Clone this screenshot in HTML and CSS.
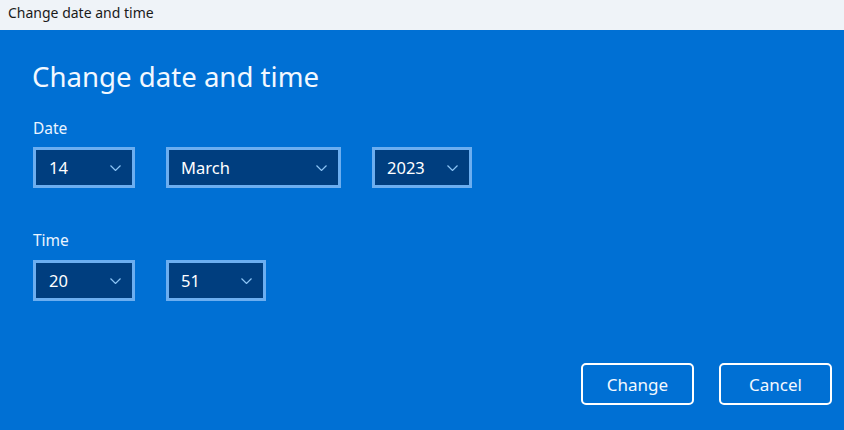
FILE: index.html
```html
<!DOCTYPE html>
<html>
<head>
<meta charset="utf-8">
<link rel="stylesheet" href="styles.css">
</head>
<body>
<div class="window">
  <div class="titlebar">Change date and time</div>
  <div class="content">
    <h1 class="heading">Change date and time</h1>
    <div class="label">Date</div>
    <div class="row">
      <div class="select w-day"><span>14</span><svg class="chev" viewBox="0 0 11 6"><path d="M0.5 0.5 L5.5 5.5 L10.5 0.5" fill="none" stroke="#8cc4f5" stroke-width="1.2"/></svg></div>
      <div class="select w-month"><span>March</span><svg class="chev" viewBox="0 0 11 6"><path d="M0.5 0.5 L5.5 5.5 L10.5 0.5" fill="none" stroke="#8cc4f5" stroke-width="1.2"/></svg></div>
      <div class="select w-year"><span>2023</span><svg class="chev" viewBox="0 0 11 6"><path d="M0.5 0.5 L5.5 5.5 L10.5 0.5" fill="none" stroke="#8cc4f5" stroke-width="1.2"/></svg></div>
    </div>
    <div class="label label-time">Time</div>
    <div class="row row-time">
      <div class="select w-day"><span>20</span><svg class="chev" viewBox="0 0 11 6"><path d="M0.5 0.5 L5.5 5.5 L10.5 0.5" fill="none" stroke="#8cc4f5" stroke-width="1.2"/></svg></div>
      <div class="select w-min"><span>51</span><svg class="chev" viewBox="0 0 11 6"><path d="M0.5 0.5 L5.5 5.5 L10.5 0.5" fill="none" stroke="#8cc4f5" stroke-width="1.2"/></svg></div>
    </div>
    <div class="actions">
      <button class="btn">Change</button>
      <button class="btn">Cancel</button>
    </div>
  </div>
</div>
</body>
</html>
```
FILE: styles.css
```css
html, body {
  margin: 0;
  padding: 0;
  width: 844px;
  height: 430px;
  overflow: hidden;
  font-family: "Noto Sans", "Open Sans", sans-serif;
}
.window {
  display: flex;
  flex-direction: column;
  height: 430px;
}
.titlebar {
  height: 30px;
  box-sizing: border-box;
  background: #eff3f8;
  color: #1a1a1a;
  font-size: 14px;
  padding-left: 8px;
  line-height: 26px;
}
.content {
  flex: 1;
  background: #0070d4;
  color: #ffffff;
  padding: 0 12px 0 33px;
  display: flex;
  flex-direction: column;
}
.heading {
  margin: 26px 0 0 -1px;
  font-weight: 400;
  font-size: 27.6px;
  line-height: 40px;
  color: #f2f8ff;
}
.label {
  margin-top: 21px;
  font-size: 15.5px;
  line-height: 22px;
  color: #eaf4ff;
}
.label-time {
  margin-top: 41px;
}
.row {
  display: flex;
  gap: 31px;
  margin-top: 8px;
}
.row-time {
  margin-top: 9px;
}
.select {
  box-sizing: border-box;
  height: 41px;
  border: 3px solid #6caef0;
  background: #003e7f;
  display: flex;
  align-items: center;
  justify-content: space-between;
  padding: 0 11px 0 13px;
  font-size: 16.5px;
  color: #ffffff;
}
.w-day { width: 102px; }
.w-month { width: 175px; padding-left: 12px; }
.w-year { width: 100px; padding-left: 12px; }
.w-min { width: 100px; padding-left: 12px; }
.chev {
  width: 11px;
  height: 6px;
}
.actions {
  display: flex;
  justify-content: flex-end;
  gap: 25px;
  margin-top: auto;
  margin-bottom: 25px;
}
.btn {
  box-sizing: border-box;
  width: 113px;
  height: 42px;
  border: 2px solid #ffffff;
  border-radius: 5px;
  background: #0070d4;
  color: #f2f8ff;
  font-family: "Noto Sans", "Open Sans", sans-serif;
  font-size: 17px;
  padding: 0;
}
```
